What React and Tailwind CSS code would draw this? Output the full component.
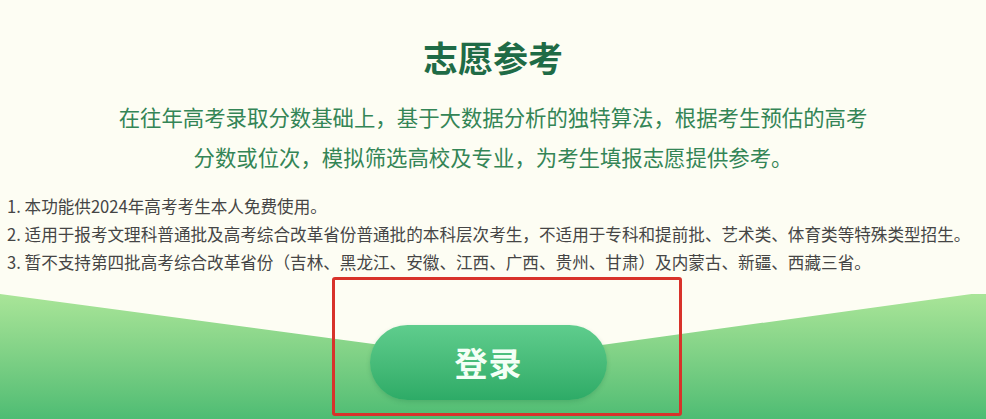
export default function App() {
  return (
    <div className="relative w-full h-[419px] overflow-hidden bg-[#fdfdf3] font-['Noto_Sans_CJK_SC','Noto_Sans',sans-serif]">
      {/* Heading */}
      <h1 className="pt-[35px] text-center text-[35px] leading-[44px] font-bold text-[#1f6b46]">志愿参考</h1>

      {/* Intro */}
      <p className="mt-[18px] text-center text-[21.4px] leading-[40px] text-[#348556]">
        <span className="block">在往年高考录取分数基础上，基于大数据分析的独特算法，根据考生预估的高考</span>
        <span className="block">分数或位次，模拟筛选高校及专业，为考生填报志愿提供参考。</span>
      </p>

      {/* Notes */}
      <ol className="mt-[15px] px-[7px] text-[16.6px] leading-[28px] text-[#454545] whitespace-nowrap">
        <li>1. 本功能供2024年高考考生本人免费使用。</li>
        <li>2. 适用于报考文理科普通批及高考综合改革省份普通批的本科层次考生，不适用于专科和提前批、艺术类、体育类等特殊类型招生。</li>
        <li>3. 暂不支持第四批高考综合改革省份（吉林、黑龙江、安徽、江西、广西、贵州、甘肃）及内蒙古、新疆、西藏三省。</li>
      </ol>

      {/* Bottom area */}
      <div className="relative h-[143px]">
        <div className="absolute left-0 right-0 top-[17px] bottom-0 bg-gradient-to-b from-[#a9e598] to-[#4cbc73] [clip-path:polygon(0_0,50%_66px,100%_-2px,100%_100%,0_100%)]" />
        <div className="relative ml-[332px] mt-[1px] w-[350px] h-[139px] border-[3px] border-[#d8322a] rounded-[3px] pt-[45px] pl-[35px]">
          <button className="w-[237px] h-[75px] rounded-full bg-gradient-to-b from-[#5fcd8d] to-[#2dab67] shadow-[0_2px_4px_rgba(30,120,70,0.25)] text-[33px] font-bold text-[#f4fff6] tracking-[1px]">
            登录
          </button>
        </div>
      </div>
    </div>
  );
}
